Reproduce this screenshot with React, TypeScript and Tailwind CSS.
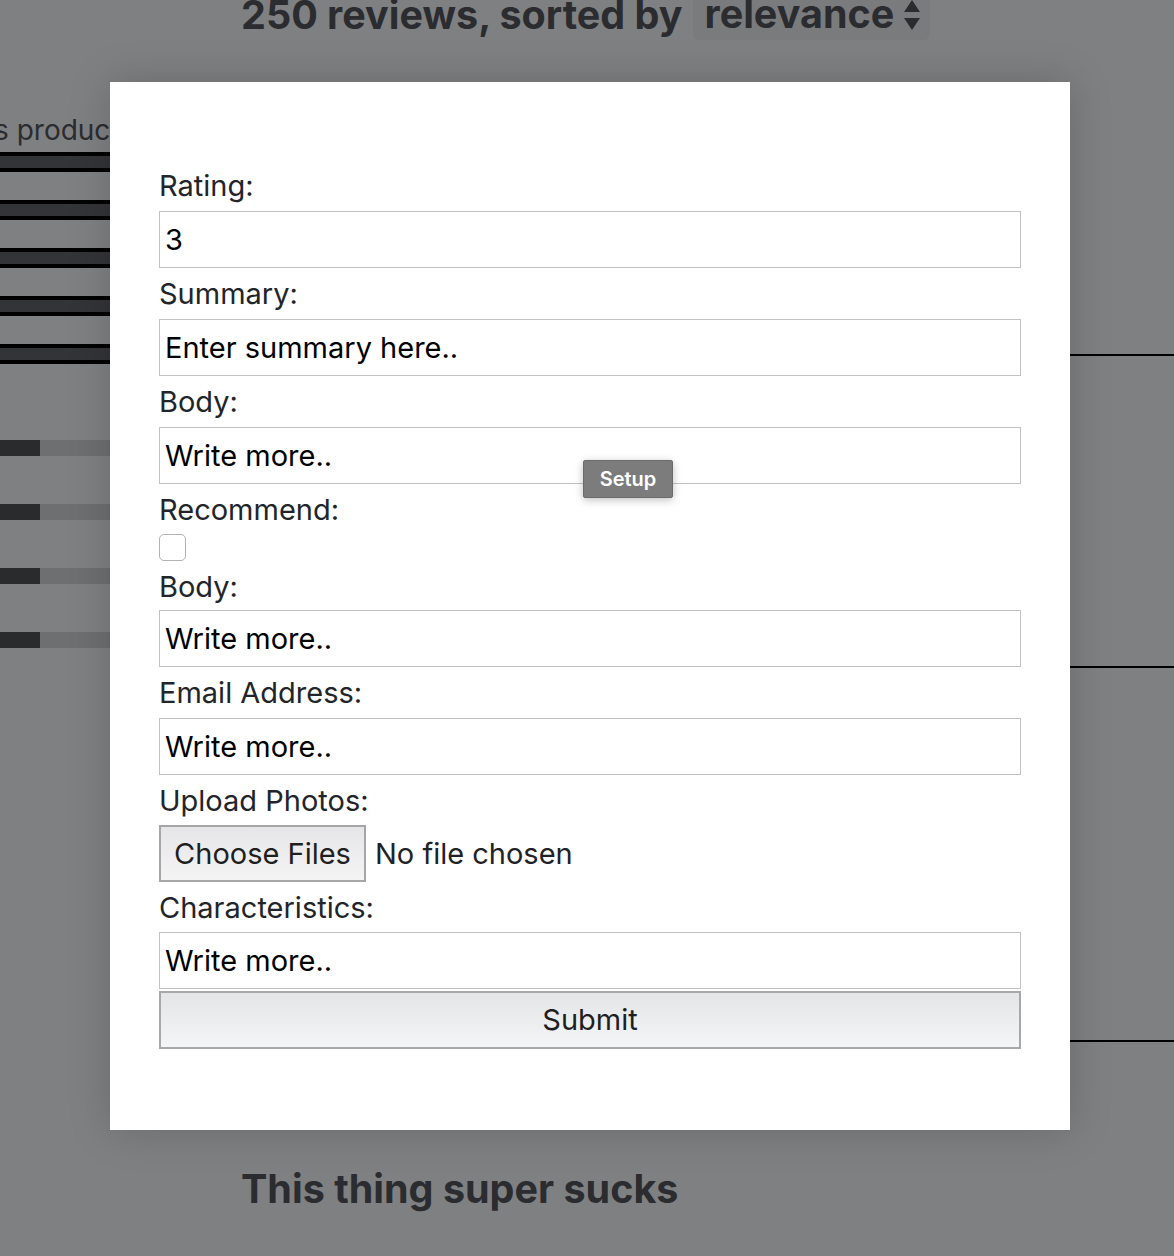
import React from 'react'

const sans = { fontFamily: 'Inter, "Noto Sans", sans-serif' }

const Label = ({ children }: { children: React.ReactNode }) => (
  <div className="h-[51px] flex items-center text-[29px] text-[#212529] leading-none">{children}</div>
)

const Field = ({ value }: { value: string }) => (
  <input
    readOnly
    defaultValue={value}
    className="block w-full h-[57px] border border-[#c2c2c2] bg-white px-[5px] text-[29px] text-black outline-none"
    style={sans}
  />
)

export default function App() {
  return (
    <div className="relative w-full h-[1256px] overflow-hidden bg-[#7f8082] text-[#2b2c2f]" style={sans}>
      {/* page behind the backdrop */}
      <div className="pl-[241px] -mt-[10px] flex items-center gap-[10px]">
        <h2 className="text-[39.5px] font-bold leading-[48px]">250 reviews, sorted by</h2>
        <div className="flex items-center gap-2 rounded-md bg-[#7a7b7d] pl-3 pr-2 h-[50px]">
          <span className="text-[39.5px] font-bold leading-none">relevance</span>
          <svg width="20" height="34" viewBox="0 0 20 34" className="fill-[#2b2c2f]">
            <path d="M10 2 L18 14 L2 14 Z" />
            <path d="M10 32 L18 20 L2 20 Z" />
          </svg>
        </div>
      </div>

      <div className="flex mt-[70px]">
        <div className="w-[200px]">
          <div className="-ml-[6px] text-[28px] leading-[40px] whitespace-nowrap">s product</div>
          <div className="flex flex-col gap-[28px] mt-[2px]">
            {[0, 1, 2, 3, 4].map((i) => (
              <div key={i} className="h-[20px] bg-[#333437] border-y-4 border-black" />
            ))}
          </div>
          <div className="flex flex-col gap-[48px] mt-[76px]">
            {[0, 1, 2, 3].map((i) => (
              <div key={i} className="flex h-[16px]">
                <div className="w-[40px] bg-[#2a2b2d]" />
                <div className="flex-1 bg-[#6e6f71]" />
              </div>
            ))}
          </div>
        </div>
        <div className="flex-1" />
        <div className="w-[104px] pt-[244px]">
          <div className="h-[2px] bg-black" />
          <div className="h-[310px]" />
          <div className="h-[2px] bg-black" />
          <div className="h-[372px]" />
          <div className="h-[2px] bg-black" />
        </div>
      </div>

      <div className="pl-[241px] mt-[123px] text-[39.5px] font-bold leading-[48px]">This thing super sucks</div>

      {/* modal */}
      <div className="absolute left-[110px] top-[82px] w-[960px] h-[1048px] bg-white px-[49px] pt-[78px] shadow-[0_0_40px_rgba(0,0,0,0.18)]">
        <form className="flex flex-col">
          <Label>Rating:</Label>
          <Field value="3" />
          <Label>Summary:</Label>
          <Field value="Enter summary here.." />
          <Label>Body:</Label>
          <Field value="Write more.." />
          <Label>Recommend:</Label>
          <div className="h-[28px] flex items-start -mt-[1px]">
            <div className="w-[27px] h-[27px] rounded-[5px] border border-[#b3b3b3] bg-white" />
          </div>
          <div className="h-[48px] flex items-center text-[29px] text-[#212529] leading-none">Body:</div>
          <Field value="Write more.." />
          <Label>Email Address:</Label>
          <Field value="Write more.." />
          <div className="h-[50px] flex items-center text-[29px] text-[#212529] leading-none">Upload Photos:</div>
          <div className="flex items-center gap-[9px] h-[57px]">
            <button
              type="button"
              className="h-[57px] w-[207px] border-2 border-[#a6a6a6] bg-gradient-to-b from-[#e6e6e8] to-[#f4f4f5] text-[29px] text-[#1f1f1f]"
            >
              Choose Files
            </button>
            <span className="text-[29px] text-[#1f2226]">No file chosen</span>
          </div>
          <div className="h-[50px] flex items-center text-[29px] text-[#212529] leading-none">Characteristics:</div>
          <Field value="Write more.." />
          <button
            type="button"
            className="mt-[2px] h-[58px] w-full border-2 border-[#a8a8a8] bg-gradient-to-b from-[#e4e5e7] to-[#f4f5f6] text-[29px] text-[#1f1f1f]"
          >
            Submit
          </button>
        </form>

        <div className="absolute left-[473px] top-[378px] w-[90px] h-[38px] flex items-center justify-center bg-[#7c7c7c] border border-[#6b6b6b] rounded-[2px] text-white text-[20px] font-semibold shadow-[0_2px_8px_rgba(0,0,0,0.25)]">
          Setup
        </div>
      </div>
    </div>
  )
}
